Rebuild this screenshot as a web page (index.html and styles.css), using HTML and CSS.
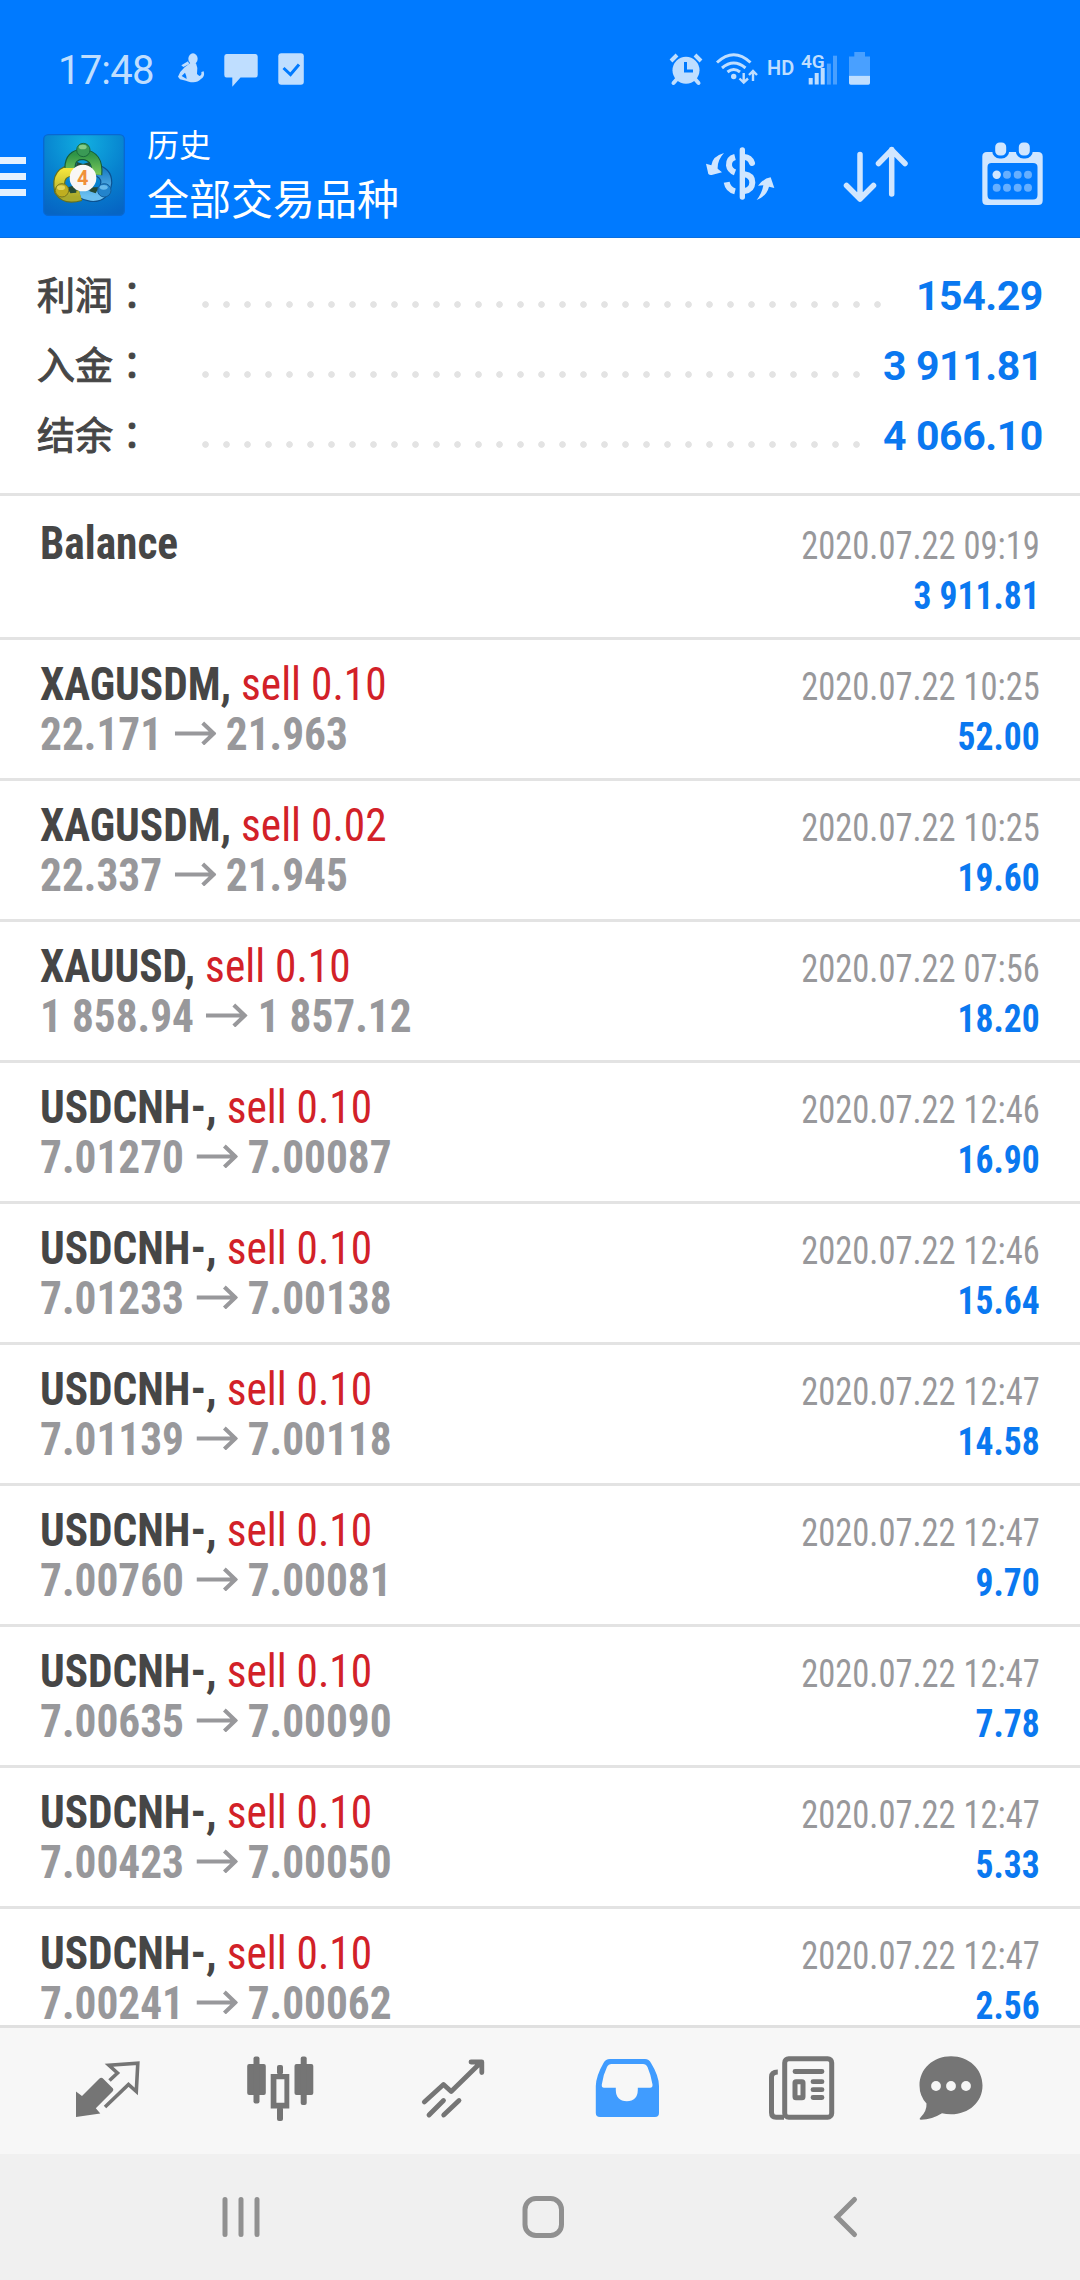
FILE: index.html
```
<!DOCTYPE html>
<html lang="zh-CN">
<head>
<meta charset="utf-8">
<title>历史</title>
<link rel="stylesheet" href="styles.css">
</head>
<body>
<svg class="defs" width="0" height="0">
  <symbol id="arrow" viewBox="0 0 42 24" preserveAspectRatio="none"><path d="M0 12.500H40M28 2L39 12.500L28 23" fill="none" stroke="currentColor" stroke-width="4"/></symbol>
</svg>
<div class="screen">
  <header class="header">
    <div class="statusbar">
      <span class="clock">17:48</span>
      <svg class="status-left" width="140" height="56" viewBox="170 40 140 56">
        <g fill="#bfdeff">
          <g transform="translate(170 46) scale(.3333)">
            <ellipse cx="69" cy="38" rx="14" ry="16"/>
            <path d="M34 58L54 46L58 54L40 63Z"/>
            <path fill-rule="evenodd" d="M62 50L78 52L82 66L81 84L88 90Q96 88 94 78L101 76Q106 92 92 100Q84 109 70 109Q54 108 48 104L30 100L24 92Q30 76 44 64ZM35 90L50 99Q50 90 45 80Z"/>
          </g>
          <path d="M226.500 54H255.500Q257.700 54 257.700 56.500V75Q257.700 77.500 255.500 77.500H240.500L232.300 86.800V77.500H226.500Q224.300 77.500 224.300 75V56.500Q224.300 54 226.500 54Z"/>
          <rect x="278.300" y="53.300" width="25.500" height="31.500" rx="3"/>
        </g>
        <path d="M283.500 68L290.500 74.500L299 64.500" fill="none" stroke="#007aff" stroke-width="3"/>
      </svg>
      <svg class="status-right" width="212" height="56" viewBox="664 40 212 56">
        <g fill="#bfdeff">
          <circle cx="686" cy="70.300" r="13.500"/>
          <g stroke="#bfdeff" fill="none">
            <path d="M671 61L677 55M701 61L695 55" stroke-width="4"/>
            <path d="M677 79L673.500 83M695 79L698.500 83" stroke-width="4" stroke-linecap="round"/>
            <path d="M717 62.500Q733.700 47 750.500 62.500M722 68Q733.700 58 745.500 68M727.500 72Q733.700 67 740 72" stroke-width="3"/>
            <path d="M743.700 73V82M739.500 78.500L743.700 82.500L748 78.500M753 81V71.500M749 75L753 71L757 75" stroke-width="2.400"/>
          </g>
          <circle cx="733.700" cy="76.500" r="2.700"/>
          <text class="net-hd" x="767" y="75">HD</text>
          <text class="net-4g" x="801" y="67.500">4G</text>
          <rect x="808.700" y="78" width="4" height="6.500"/><rect x="814.700" y="73" width="4" height="11.500"/><rect x="820.700" y="68" width="4" height="16.500"/>
          <g opacity=".38"><rect x="826.900" y="63.600" width="4" height="21"/><rect x="833" y="55.700" width="4" height="28.800"/>
          <path d="M854.300 52H865V56.500H870V75.700H849V56.500H854.300Z"/></g>
          <path d="M849 75.700H870V83Q870 84.700 868.300 84.700H850.700Q849 84.700 849 83Z"/>
        </g>
        <path d="M685.500 62V71H693" fill="none" stroke="#007aff" stroke-width="3"/>
      </svg>
    </div>
    <div class="toolbar">
      <div class="burger"><i></i><i></i><i></i></div>
      <svg class="logo" width="82" height="82" viewBox="10 12 246 246">
        <defs>
          <radialGradient id="lbg" cx=".5" cy=".1" r=".95"><stop offset="0" stop-color="#11aee0"/><stop offset=".55" stop-color="#0782cf"/><stop offset="1" stop-color="#0665c4"/></radialGradient>
          <linearGradient id="lg" x2="0" y2="1"><stop offset="0" stop-color="#2f9447"/><stop offset="1" stop-color="#7cc95a"/></linearGradient>
          <linearGradient id="ly" x2="0" y2="1"><stop offset="0" stop-color="#f3e33c"/><stop offset="1" stop-color="#a9a92c"/></linearGradient>
          <linearGradient id="lb" x2="0" y2="1"><stop offset="0" stop-color="#1d7fc6"/><stop offset="1" stop-color="#6abff0"/></linearGradient>
        </defs>
        <rect x="12" y="14" width="242" height="242" rx="14" fill="url(#lbg)" stroke="#0868d2" stroke-width="4"/>
        <g fill="none">
          <path d="M164 120Q200 126 200 158Q194 201 155 198Q124 194 109 170" stroke="#0b5190" stroke-width="36"/>
          <path d="M164 120Q200 126 200 158Q194 201 155 198Q124 194 109 170" stroke="url(#lb)" stroke-width="29"/>
          <path d="M122 196Q78 209 61 182Q48 122 106 121" stroke="#64701f" stroke-width="36"/>
          <path d="M122 196Q78 209 61 182Q48 122 106 121" stroke="url(#ly)" stroke-width="29"/>
          <path d="M91 114Q91 74 130 73Q176 78 171 134" stroke="#155d38" stroke-width="34"/>
          <path d="M91 114Q91 74 130 73Q176 78 171 134" stroke="url(#lg)" stroke-width="27"/>
        </g>
        <path d="M112 96L130 102L150 96L154 120H106ZM84 172L106 166L110 188L92 190ZM152 172L178 172L168 190L150 184Z" fill="#254b36"/>
        <circle cx="131" cy="60" r="20" fill="#3a9a55" stroke="#1b6a3c" stroke-width="3"/><ellipse cx="129" cy="51" rx="12" ry="7" fill="#85cc88"/>
        <circle cx="67" cy="181" r="20" fill="#bfae20" stroke="#77771e" stroke-width="3"/><ellipse cx="64" cy="173" rx="12" ry="7" fill="#e4d55a"/>
        <circle cx="194" cy="181" r="20" fill="#2384cc" stroke="#125d9b" stroke-width="3"/><ellipse cx="192" cy="172" rx="12" ry="7" fill="#67b9eb"/>
        <circle cx="130" cy="144" r="40" fill="#f9f7f6"/>
        <text class="logo-four" x="129" y="164" text-anchor="middle">4</text>
      </svg>
      <div class="titles">
        <div class="subtitle">历史</div>
        <div class="title">全部交易品种</div>
      </div>
      <div class="actions">
        <svg width="80" height="64" viewBox="0 0 240 192">
          <g fill="none" stroke="#d0e6ff" stroke-width="18">
            <path d="M127 30V171" stroke-width="16" stroke-linecap="round"/>
            <path d="M133 51Q150 52 156 69" stroke-linecap="round"/>
            <path d="M133 103Q157 106 157 128Q156 150 133 153"/>
            <path d="M105 51Q86 56 87 76Q89 91 105 97M80 127Q84 149 105 154"/>
          </g>
          <path fill="#d0e6ff" d="M72 39Q38 48 34 76L18 71L25 102Q30 107 38 104L66 97L53 86Q52 60 72 39ZM170 180Q186 160 190 136L174 137Q192 114 212 112L223 144L207 140Q200 168 170 180Z"/>
        </svg>
        <svg width="66" height="58" viewBox="843 146 66 58">
          <path d="M860 154.500V199M846.500 185.500L860 199L873.500 185.500M891.700 194V149.500M878.500 163.500L891.700 150L905 163.500" fill="none" stroke="#d0e6ff" stroke-width="5.500" stroke-linecap="round" stroke-linejoin="round"/>
        </svg>
        <svg width="62" height="64" viewBox="982 142 62 64">
          <path fill="#d0e6ff" fill-rule="evenodd" d="M987 152H1038Q1042.700 152 1042.700 156.500V200.500Q1042.700 205 1038 205H987Q982.300 205 982.300 200.500V156.500Q982.300 152 987 152ZM991.500 163Q987.500 163 987.500 167V195Q987.500 199.500 991.500 199.500H1033Q1037.500 199.500 1037.500 195V167Q1037.500 163 1033 163Z"/>
          <g fill="#d0e6ff" stroke="#007aff" stroke-width="3"><rect x="993.700" y="141" width="14" height="16" rx="6"/><rect x="1017.300" y="141" width="14" height="16" rx="6"/></g>
          <circle cx="996.700" cy="174.700" r="4.200" fill="#d0e6ff"/>
          <g fill="#66afff"><circle cx="1007" cy="174.700" r="4"/><circle cx="1017.700" cy="174.700" r="4"/><circle cx="1028" cy="174.700" r="4"/><circle cx="996.700" cy="187.700" r="4"/><circle cx="1007" cy="187.700" r="4"/><circle cx="1017.700" cy="187.700" r="4"/><circle cx="1028" cy="187.700" r="4"/></g>
        </svg>
      </div>
    </div>
  </header>

  <section class="summary">
    <div class="sum-row"><span class="sum-label">利润<span class="colon" lang="ja">：</span></span><span class="dots"></span><span class="sum-value">154.29</span></div>
    <div class="sum-row"><span class="sum-label">入金<span class="colon" lang="ja">：</span></span><span class="dots short"></span><span class="sum-value">3 911.81</span></div>
    <div class="sum-row"><span class="sum-label">结余<span class="colon" lang="ja">：</span></span><span class="dots short"></span><span class="sum-value">4 066.10</span></div>
  </section>

  <main class="deals">
    <div class="deal first"><div class="left"><div class="symbol">Balance</div></div><div class="right"><div class="time">2020.07.22 09:19</div><div class="profit">3 911.81</div></div></div>
    <div class="deal"><div class="left"><div class="symbol">XAGUSDM, <span class="sell">sell 0.10</span></div><div class="prices">22.171<svg><use href="#arrow"/></svg>21.963</div></div><div class="right"><div class="time">2020.07.22 10:25</div><div class="profit">52.00</div></div></div>
    <div class="deal"><div class="left"><div class="symbol">XAGUSDM, <span class="sell">sell 0.02</span></div><div class="prices">22.337<svg><use href="#arrow"/></svg>21.945</div></div><div class="right"><div class="time">2020.07.22 10:25</div><div class="profit">19.60</div></div></div>
    <div class="deal"><div class="left"><div class="symbol">XAUUSD, <span class="sell">sell 0.10</span></div><div class="prices">1 858.94<svg><use href="#arrow"/></svg>1 857.12</div></div><div class="right"><div class="time">2020.07.22 07:56</div><div class="profit">18.20</div></div></div>
    <div class="deal"><div class="left"><div class="symbol">USDCNH-, <span class="sell">sell 0.10</span></div><div class="prices">7.01270<svg><use href="#arrow"/></svg>7.00087</div></div><div class="right"><div class="time">2020.07.22 12:46</div><div class="profit">16.90</div></div></div>
    <div class="deal"><div class="left"><div class="symbol">USDCNH-, <span class="sell">sell 0.10</span></div><div class="prices">7.01233<svg><use href="#arrow"/></svg>7.00138</div></div><div class="right"><div class="time">2020.07.22 12:46</div><div class="profit">15.64</div></div></div>
    <div class="deal"><div class="left"><div class="symbol">USDCNH-, <span class="sell">sell 0.10</span></div><div class="prices">7.01139<svg><use href="#arrow"/></svg>7.00118</div></div><div class="right"><div class="time">2020.07.22 12:47</div><div class="profit">14.58</div></div></div>
    <div class="deal"><div class="left"><div class="symbol">USDCNH-, <span class="sell">sell 0.10</span></div><div class="prices">7.00760<svg><use href="#arrow"/></svg>7.00081</div></div><div class="right"><div class="time">2020.07.22 12:47</div><div class="profit">9.70</div></div></div>
    <div class="deal"><div class="left"><div class="symbol">USDCNH-, <span class="sell">sell 0.10</span></div><div class="prices">7.00635<svg><use href="#arrow"/></svg>7.00090</div></div><div class="right"><div class="time">2020.07.22 12:47</div><div class="profit">7.78</div></div></div>
    <div class="deal"><div class="left"><div class="symbol">USDCNH-, <span class="sell">sell 0.10</span></div><div class="prices">7.00423<svg><use href="#arrow"/></svg>7.00050</div></div><div class="right"><div class="time">2020.07.22 12:47</div><div class="profit">5.33</div></div></div>
    <div class="deal"><div class="left"><div class="symbol">USDCNH-, <span class="sell">sell 0.10</span></div><div class="prices">7.00241<svg><use href="#arrow"/></svg>7.00062</div></div><div class="right"><div class="time">2020.07.22 12:47</div><div class="profit">2.56</div></div></div>
  </main>

  <nav class="tabs">
    <svg width="68" height="70" viewBox="74 2053 68 70">
      <path fill="#757575" d="M76 2091.500L82 2096L99.500 2078.500Q101.500 2077 103.500 2079L113 2088.500Q114 2090 112.500 2091.500L95.800 2108.300L100.300 2113.500L76 2117Z"/>
      <path fill="none" stroke="#757575" stroke-width="3.600" d="M109.500 2080.500L117.500 2073L109 2065.300L137.800 2063.300L136.300 2091.500L128.500 2084.500L105 2107"/>
    </svg>
    <svg width="68" height="70" viewBox="246 2053 68 70">
      <g fill="#757575"><rect x="247.200" y="2064" width="18.600" height="31" rx="2"/><rect x="253.500" y="2056.500" width="6" height="47" rx="2"/>
      <path fill-rule="evenodd" d="M270.700 2074H289.300V2108.500H270.700ZM276.400 2079.300V2102.700H284.400V2079.300Z"/><rect x="277" y="2065" width="6" height="9.500" rx="2"/><rect x="277" y="2107" width="6" height="14" rx="2"/>
      <rect x="294.500" y="2064" width="18.800" height="31" rx="2"/><rect x="300.700" y="2056.500" width="6" height="48.500" rx="2"/></g>
    </svg>
    <svg width="68" height="70" viewBox="419 2053 68 70">
      <path fill="none" stroke="#757575" stroke-width="4.800" stroke-linecap="round" stroke-linejoin="round" d="M424.300 2102L443.500 2084.500L451.200 2091.500L481.300 2062M471 2062H481.800V2072.500M429 2115L443.500 2100.500M443.700 2115L459 2100.500"/>
    </svg>
    <svg width="68" height="70" viewBox="593 2053 68 70">
      <path fill="#409cff" fill-rule="evenodd" d="M610 2059H645Q649 2059 651 2063Q659 2076 659 2086V2113Q659 2117 655 2117H600Q595.800 2117 595.800 2113V2086Q596 2076 603.500 2063Q605.500 2059 610 2059ZM611.500 2064Q608.500 2064 607 2067Q603 2075 601.800 2084.500Q601.500 2087.700 604 2087.700H615.800V2090Q616 2101 626.800 2101.200Q637.600 2101 637.800 2090V2087.700H650Q652.800 2087.700 652.500 2084.500Q651 2075 647.500 2067Q646 2064 643 2064Z"/>
    </svg>
    <svg width="68" height="70" viewBox="768 2053 68 70">
      <g fill="none" stroke="#757575" stroke-width="5"><rect x="784.700" y="2058.700" width="47" height="58.500" rx="4"/><path d="M784 2117.200H776Q771.500 2117.200 771.500 2112.500V2077Q771.500 2072 777.800 2072"/>
      <path d="M795 2071.500H822M813 2081.700H822M813 2089.700H822M813 2097.500H822" stroke-linecap="round" stroke-width="4.800"/><rect x="795" y="2081.700" width="8" height="16" rx="1"/></g>
    </svg>
    <svg width="68" height="70" viewBox="917 2053 68 70">
      <path fill="#757575" d="M951 2056.300C969 2056.300 982.500 2069 982.500 2085.500C982.500 2102 969 2114.300 951 2114.300Q946 2114.300 942 2113.200Q932 2119.500 921 2119.800Q918.500 2119.500 920.500 2117.500Q927 2111 926.500 2103.500Q919.500 2096 919.500 2085.500C919.500 2069 933 2056.300 951 2056.300Z"/>
      <g fill="#f7f7f7"><circle cx="936" cy="2086" r="4.900"/><circle cx="951" cy="2086" r="4.900"/><circle cx="966" cy="2086" r="4.900"/></g>
    </svg>
  </nav>

  <footer class="sysnav">
    <svg width="44" height="50" viewBox="219 2192 44 50"><path d="M225 2199.500V2234.500M241 2199.500V2234.500M257 2199.500V2234.500" stroke="#909090" stroke-width="5" stroke-linecap="round"/></svg>
    <svg width="44" height="50" viewBox="522 2192 44 50"><rect x="525" y="2198.500" width="36.500" height="37" rx="11" fill="none" stroke="#909090" stroke-width="5"/></svg>
    <svg width="44" height="50" viewBox="824 2192 44 50"><path d="M854.500 2199.500L837 2217L854.500 2234.500" fill="none" stroke="#909090" stroke-width="5" stroke-linecap="round"/></svg>
  </footer>
</div>
</body>
</html>
```
FILE: styles.css
```
* { box-sizing: border-box; }
body { margin: 0; background: #fff; font-family: Roboto, "Noto Sans CJK SC", sans-serif; }
svg { display: block; flex: none; }
.defs { position: absolute; }
.screen { width: 1080px; height: 2280px; display: flex; flex-direction: column; overflow: hidden; }

/* header */
.header { height: 238px; flex: none; background: #007aff; border-bottom: 1px solid #0a6fe0; }
.statusbar { height: 96px; padding: 40px 0 0 58px; display: flex; }
.clock { width: 112px; padding-top: 1px; font-size: 40px; line-height: 60px; color: #bfdeff; letter-spacing: -.8px; }
.status-right { margin-left: 354px; }
.net-hd { font: 600 20px Roboto, sans-serif; }
.net-4g { font: 600 19px Roboto, sans-serif; }
.toolbar { height: 141px; display: flex; align-items: flex-start; }
.burger { width: 43px; padding-top: 61px; display: flex; flex-direction: column; gap: 9px; }
.burger i { width: 26px; height: 7px; background: #e4f1ff; }
.logo { margin-top: 38px; }
.logo-four { font: 700 60px Roboto, sans-serif; fill: #f0913a; }
.titles { margin-left: 22px; padding-top: 24px; color: #fff; font-family: "Noto Sans CJK SC", sans-serif; white-space: nowrap; }
.subtitle { font-size: 32px; line-height: 46px; }
.title { font-size: 42px; line-height: 62px; }
.actions { margin-left: auto; padding: 44px 36px 0 0; display: flex; }
.actions svg:nth-child(2) { margin: 6px 73px 0 63px; }
.actions svg:nth-child(3) { margin-top: 2px; }

/* account summary */
.summary { height: 258px; flex: none; padding: 20px 37px 0; border-bottom: 3px solid #e3e3e3; }
.sum-row { height: 70px; display: flex; align-items: center; }
.sum-label { width: 165px; font: 400 38px/70px "Noto Sans CJK SC", sans-serif; color: #464646; -webkit-text-stroke: 1px #464646; }
.colon { font-family: "Noto Sans CJK JP", sans-serif; }
.dots { width: 693px; height: 7px; margin-top: 23px; background: radial-gradient(circle at 3.5px 3.5px, #e3e3e3 2.9px, transparent 3.7px) 0 0 / 21px 7px repeat-x; }
.dots.short { width: 672px; }
.sum-value { margin-left: auto; padding-top: 6px; font-size: 41px; line-height: 70px; font-weight: 700; letter-spacing: -.4px; color: #0a78f0; white-space: pre; }

/* deals: the faces are narrowed a little beyond the condensed cut */
.deals { flex: 1; min-height: 0; overflow: hidden; font-family: "Roboto Condensed", Roboto, sans-serif; }
.deal { height: 141px; padding: 19px 40px 0; border-bottom: 3px solid #e3e3e3; display: flex; justify-content: space-between; line-height: 50px; }
.deal.first { height: 144px; padding-top: 22px; }
.left { transform: scaleX(.942); transform-origin: left; }
.symbol, .prices { height: 50px; font-size: 46px; font-weight: 700; white-space: pre; }
.symbol { color: #464646; }
.sell { font-weight: 400; color: #d22128; }
.prices { display: flex; align-items: center; color: #98989b; }
.prices svg { width: 44.6px; height: 24px; margin: -3px 10px 0 13px; }
.right { padding-top: 3px; text-align: right; font-size: 38px; white-space: pre; }
.time, .profit { transform: scaleX(.908); transform-origin: right; }
.time { color: #98989b; }
.profit { transform: scaleX(.935); font-weight: 700; color: #0a78f0; }

/* bottom bars */
.tabs { height: 129px; flex: none; border-top: 3px solid #e0e0e0; background: #f7f7f7; display: flex; padding: 25px 0 0 74px; }
.tabs svg:nth-child(2) { margin-left: 104px; }
.tabs svg:nth-child(3) { margin-left: 105px; }
.tabs svg:nth-child(4) { margin-left: 106px; }
.tabs svg:nth-child(5) { margin-left: 107px; }
.tabs svg:nth-child(6) { margin-left: 81px; }
.sysnav { height: 126px; flex: none; background: #f0f0f0; display: flex; justify-content: space-between; padding: 38px 212px 0 219px; }
```
